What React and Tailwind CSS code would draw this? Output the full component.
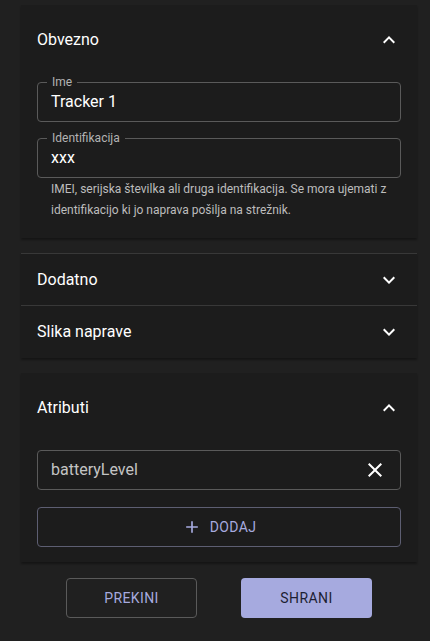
import React from 'react';

const font = { fontFamily: 'Roboto, "Noto Sans", sans-serif' };

function ChevronUp() {
  return (
    <svg viewBox="0 0 24 24" className="w-6 h-6" fill="#ffffff">
      <path d="M12 8l-6 6 1.41 1.41L12 10.83l4.59 4.58L18 14z" />
    </svg>
  );
}

function ChevronDown() {
  return (
    <svg viewBox="0 0 24 24" className="w-6 h-6" fill="#ffffff">
      <path d="M16.59 8.59L12 13.17 7.41 8.59 6 10l6 6 6-6z" />
    </svg>
  );
}

function CloseIcon() {
  return (
    <svg viewBox="0 0 24 24" className="w-6 h-6" fill="#ffffff">
      <path d="M19 6.41L17.59 5 12 10.59 6.41 5 5 6.41 10.59 12 5 17.59 6.41 19 12 13.41 17.59 19 19 17.59 13.41 12z" />
    </svg>
  );
}

function PlusIcon() {
  return (
    <svg viewBox="0 0 24 24" className="w-5 h-5" fill="#a6aadf">
      <path d="M19 13h-6v6h-2v-6H5v-2h6V5h2v6h6v2z" />
    </svg>
  );
}

function Field({ label, value }) {
  return (
    <div className="relative h-[40px] rounded-[4px] border border-[#5a5a5a] flex items-center px-[13px]">
      <span className="absolute -top-[9px] left-[9px] px-[5px] bg-[#1c1c1c] text-[12px] leading-[16px] text-[#b3b3b3]">
        {label}
      </span>
      <span className="text-[16px] text-white">{value}</span>
    </div>
  );
}

function Header({ title, open }) {
  return (
    <div className="flex items-center justify-between px-4 pt-[23px] pb-[23px]">
      <span className="text-[16px] leading-[24px] text-white">{title}</span>
      {open ? <ChevronUp /> : <ChevronDown />}
    </div>
  );
}

function Collapsed({ title, tall }) {
  return (
    <div className={'flex items-center justify-between px-4 border-t border-[#383838] ' + (tall ? 'h-[53px]' : 'h-[52px]')}>
      <span className="text-[16px] leading-[24px] text-white">{title}</span>
      <ChevronDown />
    </div>
  );
}

export default function App() {
  return (
    <div className="min-h-[641px] bg-[#202020] pt-[5px] pl-[21px]" style={font}>
      <div className="w-[396px] flex flex-col">
        <section className="bg-[#1c1c1c] shadow-[0_2px_2px_rgba(0,0,0,0.35)]">
          <Header title="Obvezno" open />
          <div className="px-4 pt-[7px] pb-[17px] flex flex-col gap-[16px]">
            <Field label="Ime" value="Tracker 1" />
            <div>
              <Field label="Identifikacija" value="xxx" />
              <p className="mt-[1px] px-[14px] text-[12px] leading-[21px] text-[#bdbdbd]">
                IMEI, serijska številka ali druga identifikacija. Se mora ujemati z identifikacijo ki jo naprava pošilja na strežnik.
              </p>
            </div>
          </div>
        </section>

        <section className="mt-[15px] bg-[#1c1c1c] shadow-[0_2px_2px_rgba(0,0,0,0.35)]">
          <Collapsed title="Dodatno" />
          <Collapsed title="Slika naprave" tall />
        </section>

        <section className="mt-[15px] bg-[#1c1c1c] shadow-[0_2px_2px_rgba(0,0,0,0.35)]">
          <Header title="Atributi" open />
          <div className="px-4 pt-[7px] pb-[15px] flex flex-col gap-[17px]">
            <div className="h-[40px] rounded-[4px] border border-[#5a5a5a] flex items-center justify-between pl-[13px] pr-[13px]">
              <span className="text-[16px] text-[#c4c4c4]">batteryLevel</span>
              <CloseIcon />
            </div>
            <button className="h-[40px] rounded-[4px] border border-[#5d5e72] flex items-center justify-center gap-2 text-[14px] tracking-[0.4px] text-[#a6aadf]">
              <PlusIcon />
              DODAJ
            </button>
          </div>
        </section>

        <div className="flex justify-center gap-[44px] mt-4">
          <button className="w-[131px] h-[40px] rounded-[4px] border border-[#5a5a5a] text-[14px] tracking-[0.4px] text-[#a6aadf]">
            PREKINI
          </button>
          <button className="w-[131px] h-[40px] rounded-[4px] bg-[#a6aadf] text-[14px] tracking-[0.4px] text-[#1d1f33]">
            SHRANI
          </button>
        </div>
      </div>
    </div>
  );
}
